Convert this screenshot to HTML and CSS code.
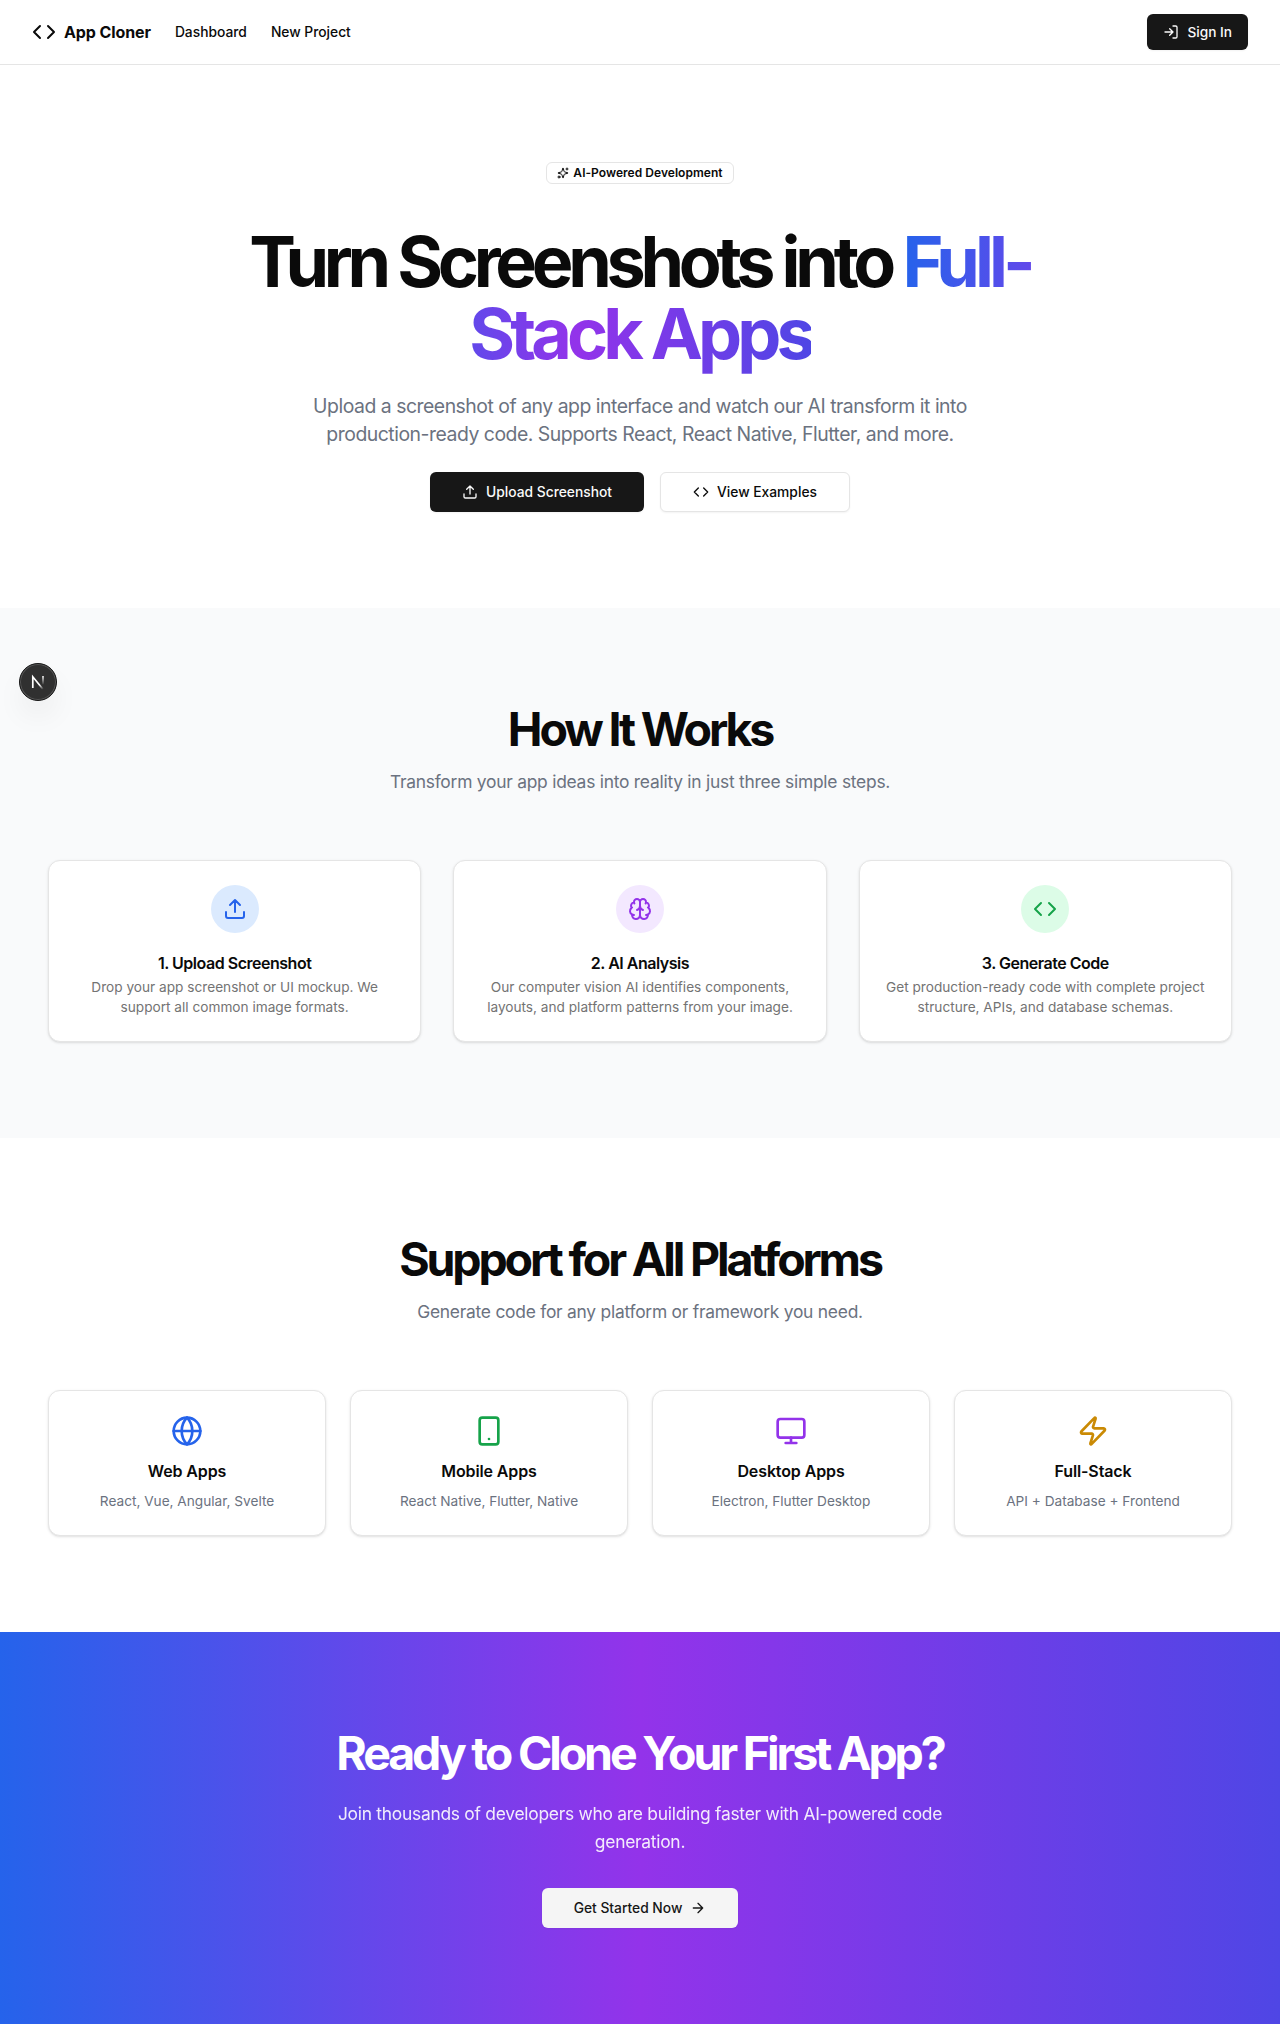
FILE: index.html
```html
<!DOCTYPE html>
<html lang="en">
<head>
<meta charset="utf-8">
<title>App Cloner</title>
<link rel="stylesheet" href="styles.css">
</head>
<body>
<svg class="sprite" aria-hidden="true">
  <symbol id="code" viewBox="0 0 24 24"><path d="m16 18 6-6-6-6M8 6l-6 6 6 6"/></symbol>
  <symbol id="upload" viewBox="0 0 24 24"><path d="M12 3v12M17 8l-5-5-5 5M21 15v4a2 2 0 0 1-2 2H5a2 2 0 0 1-2-2v-4"/></symbol>
</svg>
<header class="header">
  <nav class="nav">
    <a class="brand"><svg class="icon icon-24"><use href="#code"/></svg><span>App Cloner</span></a>
    <a class="link">Dashboard</a>
    <a class="link">New Project</a>
  </nav>
  <a class="btn btn-dark btn-signin"><svg class="icon icon-16" viewBox="0 0 24 24"><path d="m10 17 5-5-5-5M15 12H3M15 3h4a2 2 0 0 1 2 2v14a2 2 0 0 1-2 2h-4"/></svg>Sign In</a>
</header>
<main>
  <section class="hero">
    <span class="badge"><svg class="icon icon-12" viewBox="0 0 24 24"><path d="M9.937 15.5A2 2 0 0 0 8.5 14.063l-6.135-1.582a.5.5 0 0 1 0-.962L8.5 9.936A2 2 0 0 0 9.937 8.5l1.582-6.135a.5.5 0 0 1 .963 0L14.063 8.5A2 2 0 0 0 15.5 9.937l6.135 1.581a.5.5 0 0 1 0 .964L15.5 14.063a2 2 0 0 0-1.437 1.437l-1.582 6.135a.5.5 0 0 1-.963 0zM20 2v4M22 4h-4"/><circle cx="4" cy="20" r="2"/></svg>AI-Powered Development</span>
    <h1>Turn Screenshots into <span class="gradient-text">Full-Stack Apps</span></h1>
    <p class="lead">Upload a screenshot of any app interface and watch our AI transform it into production-ready code. Supports React, React Native, Flutter, and more.</p>
    <div class="actions">
      <a class="btn btn-dark btn-large"><svg class="icon icon-16"><use href="#upload"/></svg>Upload Screenshot</a>
      <a class="btn btn-outline btn-large"><svg class="icon icon-16"><use href="#code"/></svg>View Examples</a>
    </div>
  </section>
  <section class="section muted">
    <h2>How It Works</h2>
    <p class="sub">Transform your app ideas into reality in just three simple steps.</p>
    <div class="steps">
      <article class="card">
        <div class="disc blue"><svg class="icon icon-24"><use href="#upload"/></svg></div>
        <h3>1. Upload Screenshot</h3>
        <p>Drop your app screenshot or UI mockup. We support all common image formats.</p>
      </article>
      <article class="card">
        <div class="disc purple"><svg class="icon icon-24" viewBox="0 0 24 24"><path d="M12 5a3 3 0 1 0-5.997.125 4 4 0 0 0-2.526 5.77 4 4 0 0 0 .556 6.588A4 4 0 1 0 12 18ZM12 5a3 3 0 1 1 5.997.125 4 4 0 0 1 2.526 5.77 4 4 0 0 1-.556 6.588A4 4 0 1 1 12 18ZM15 13a4.5 4.5 0 0 1-3-4 4.5 4.5 0 0 1-3 4M17.599 6.5a3 3 0 0 0 .399-1.375M6.003 5.125A3 3 0 0 0 6.401 6.5M3.477 10.896a4 4 0 0 1 .585-.396M19.938 10.5a4 4 0 0 1 .585.396M6 18a4 4 0 0 1-1.967-.516M19.967 17.484A4 4 0 0 1 18 18"/></svg></div>
        <h3>2. AI Analysis</h3>
        <p>Our computer vision AI identifies components, layouts, and platform patterns from your image.</p>
      </article>
      <article class="card">
        <div class="disc green"><svg class="icon icon-24"><use href="#code"/></svg></div>
        <h3>3. Generate Code</h3>
        <p>Get production-ready code with complete project structure, APIs, and database schemas.</p>
      </article>
    </div>
  </section>
  <section class="section">
    <h2>Support for All Platforms</h2>
    <p class="sub">Generate code for any platform or framework you need.</p>
    <div class="platforms">
      <article class="card platform">
        <svg class="icon icon-32 tint-blue" viewBox="0 0 24 24"><circle cx="12" cy="12" r="10"/><path d="M12 2a14.5 14.5 0 0 0 0 20 14.5 14.5 0 0 0 0-20M2 12h20"/></svg>
        <h3>Web Apps</h3>
        <p>React, Vue, Angular, Svelte</p>
      </article>
      <article class="card platform">
        <svg class="icon icon-32 tint-green" viewBox="0 0 24 24"><rect width="14" height="20" x="5" y="2" rx="2"/><path d="M12 18h.01"/></svg>
        <h3>Mobile Apps</h3>
        <p>React Native, Flutter, Native</p>
      </article>
      <article class="card platform">
        <svg class="icon icon-32 tint-purple" viewBox="0 0 24 24"><rect width="20" height="14" x="2" y="3" rx="2"/><path d="M8 21h8M12 17v4"/></svg>
        <h3>Desktop Apps</h3>
        <p>Electron, Flutter Desktop</p>
      </article>
      <article class="card platform">
        <svg class="icon icon-32 tint-gold" viewBox="0 0 24 24"><path d="M4 14a1 1 0 0 1-.78-1.63l9.9-10.2a.5.5 0 0 1 .86.46l-1.92 6.02A1 1 0 0 0 13 10h7a1 1 0 0 1 .78 1.63l-9.9 10.2a.5.5 0 0 1-.86-.46l1.92-6.02A1 1 0 0 0 11 14z"/></svg>
        <h3>Full-Stack</h3>
        <p>API + Database + Frontend</p>
      </article>
    </div>
  </section>
  <section class="cta">
    <h2>Ready to Clone Your First App?</h2>
    <p>Join thousands of developers who are building faster with AI-powered code generation.</p>
    <a class="btn btn-light btn-large">Get Started Now<svg class="icon icon-16" viewBox="0 0 24 24"><path d="M5 12h14M12 5l7 7-7 7"/></svg></a>
  </section>
</main>
<div class="dev-badge">
  <svg width="40" height="40" viewBox="0 0 40 40" fill="none">
    <defs>
      <linearGradient id="diag" x1="20" y1="20" x2="25.5" y2="27" gradientUnits="userSpaceOnUse"><stop offset=".35" stop-color="#fff"/><stop offset="1" stop-color="#fff" stop-opacity="0"/></linearGradient>
      <linearGradient id="stem" x1="0" y1="14" x2="0" y2="23" gradientUnits="userSpaceOnUse"><stop stop-color="#fff"/><stop offset="1" stop-color="#fff" stop-opacity="0"/></linearGradient>
    </defs>
    <path d="M14.8 26V14.8L25 27.2" stroke="url(#diag)" stroke-width="1.7"/>
    <path d="M25 14v8.5" stroke="url(#stem)" stroke-width="1.6"/>
  </svg>
</div>
</body>
</html>
```
FILE: styles.css
```css
* { box-sizing: border-box; }
body { margin: 0; font-family: Inter, "Liberation Sans", sans-serif; color: #0a0a0a; background: #fff; font-size: 16px; line-height: 24px; -webkit-font-smoothing: antialiased; }
h1, h2, h3, p { margin: 0; }
.sprite { position: absolute; width: 0; height: 0; }
.icon { flex: none; fill: none; stroke: currentColor; stroke-width: 2; stroke-linecap: round; stroke-linejoin: round; }
.icon-12 { width: 12px; height: 12px; }
.icon-16 { width: 16px; height: 16px; }
.icon-24 { width: 24px; height: 24px; }
.icon-32 { width: 32px; height: 32px; }

.header { height: 65px; padding: 0 32px; display: flex; align-items: center; justify-content: space-between; border-bottom: 1px solid #e5e5e5; }
.nav { display: flex; align-items: center; gap: 24px; }
.brand { display: flex; align-items: center; gap: 8px; font-weight: 700; letter-spacing: -0.1px; }
.link { font-size: 13.8px; line-height: 20px; font-weight: 500; }

.btn { display: inline-flex; align-items: center; justify-content: center; gap: 8px; height: 36px; padding: 0 16px; border-radius: 6px; font-size: 13.8px; line-height: 20px; font-weight: 500; white-space: nowrap; box-shadow: 0 1px 2px rgba(0, 0, 0, .05); }
.btn-signin { font-size: 13.7px; }
.btn-large { height: 40px; padding: 0 32px; }
.btn-dark { background: #171717; color: #fafafa; }
.btn-outline { border: 1px solid #e5e5e5; background: #fff; }
.btn-light { background: #f5f5f5; color: #171717; }

.hero { height: 543px; padding: 97px 48px 96px; display: flex; flex-direction: column; align-items: center; text-align: center; }
.badge { display: inline-flex; flex: none; align-items: center; gap: 4px; height: 22px; padding: 0 10px; border: 1px solid #e5e5e5; border-radius: 6px; font-size: 12px; line-height: 16px; font-weight: 600; letter-spacing: 0.04px; }
h1 { width: 896px; margin-top: 42px; font-size: 70px; line-height: 72px; font-weight: 700; letter-spacing: -5.25px; }
.gradient-text { letter-spacing: -4.9px; color: transparent; background: linear-gradient(to right, #2563eb, #9333ea, #4f46e5); -webkit-background-clip: text; background-clip: text; }
.lead { width: 672px; margin-top: 22px; font-size: 19.4px; line-height: 28px; letter-spacing: -0.48px; color: #6b7280; }
.actions { display: flex; gap: 16px; margin-top: 24px; }

.section { padding: 96px 48px; text-align: center; }
.muted { background: #f9fafb; }
h2 { font-size: 46.5px; line-height: 50px; font-weight: 700; letter-spacing: -3.15px; }
.sub { margin-top: 14px; font-size: 17.4px; line-height: 28px; letter-spacing: -0.24px; color: #6b7280; }
.steps, .platforms { display: grid; grid-template-columns: repeat(3, 1fr); gap: 32px; margin-top: 64px; }
.platforms { grid-template-columns: repeat(4, 1fr); gap: 24px; }
.card { display: flex; flex-direction: column; align-items: center; padding: 24px; background: #fff; border: 1px solid #e5e5e5; border-radius: 12px; box-shadow: 0 1px 3px rgba(0, 0, 0, .1), 0 1px 2px -1px rgba(0, 0, 0, .1); }
.card h3 { margin-top: 22px; font-size: 16px; line-height: 16px; font-weight: 600; letter-spacing: -0.48px; }
.card p { margin-top: 6px; font-size: 13.65px; line-height: 20px; color: #737373; }
.card.platform h3 { margin-top: 12px; line-height: 24px; letter-spacing: -0.12px; }
.card.platform p { margin-top: 8px; color: #6b7280; }
.disc { display: flex; align-items: center; justify-content: center; width: 48px; height: 48px; border-radius: 50%; }
.blue { background: #dbeafe; color: #2563eb; }
.purple { background: #f3e8ff; color: #9333ea; }
.green { background: #dcfce7; color: #16a34a; }
.tint-blue { color: #2563eb; }
.tint-purple { color: #9333ea; }
.tint-green { color: #16a34a; }
.tint-gold { color: #ca8a04; }

.cta { height: 392px; padding: 96px 48px; display: flex; flex-direction: column; align-items: center; text-align: center; color: #fff; background: linear-gradient(to right, #2563eb, #9333ea, #4f46e5); }
.cta p { width: 640px; margin: 22px 0 32px; font-size: 17.4px; line-height: 28px; letter-spacing: -0.26px; opacity: .9; }

/* Development indicator floating above the page */
.dev-badge { position: absolute; left: 19px; top: 663px; width: 38px; height: 38px; display: flex; align-items: center; justify-content: center; border: 1px solid #171717; border-radius: 50%; background: #303030; box-shadow: inset 0 0 0 1px #565656, 0 16px 32px -8px rgba(0, 0, 0, .14); }
.dev-badge svg { flex: none; }
```
